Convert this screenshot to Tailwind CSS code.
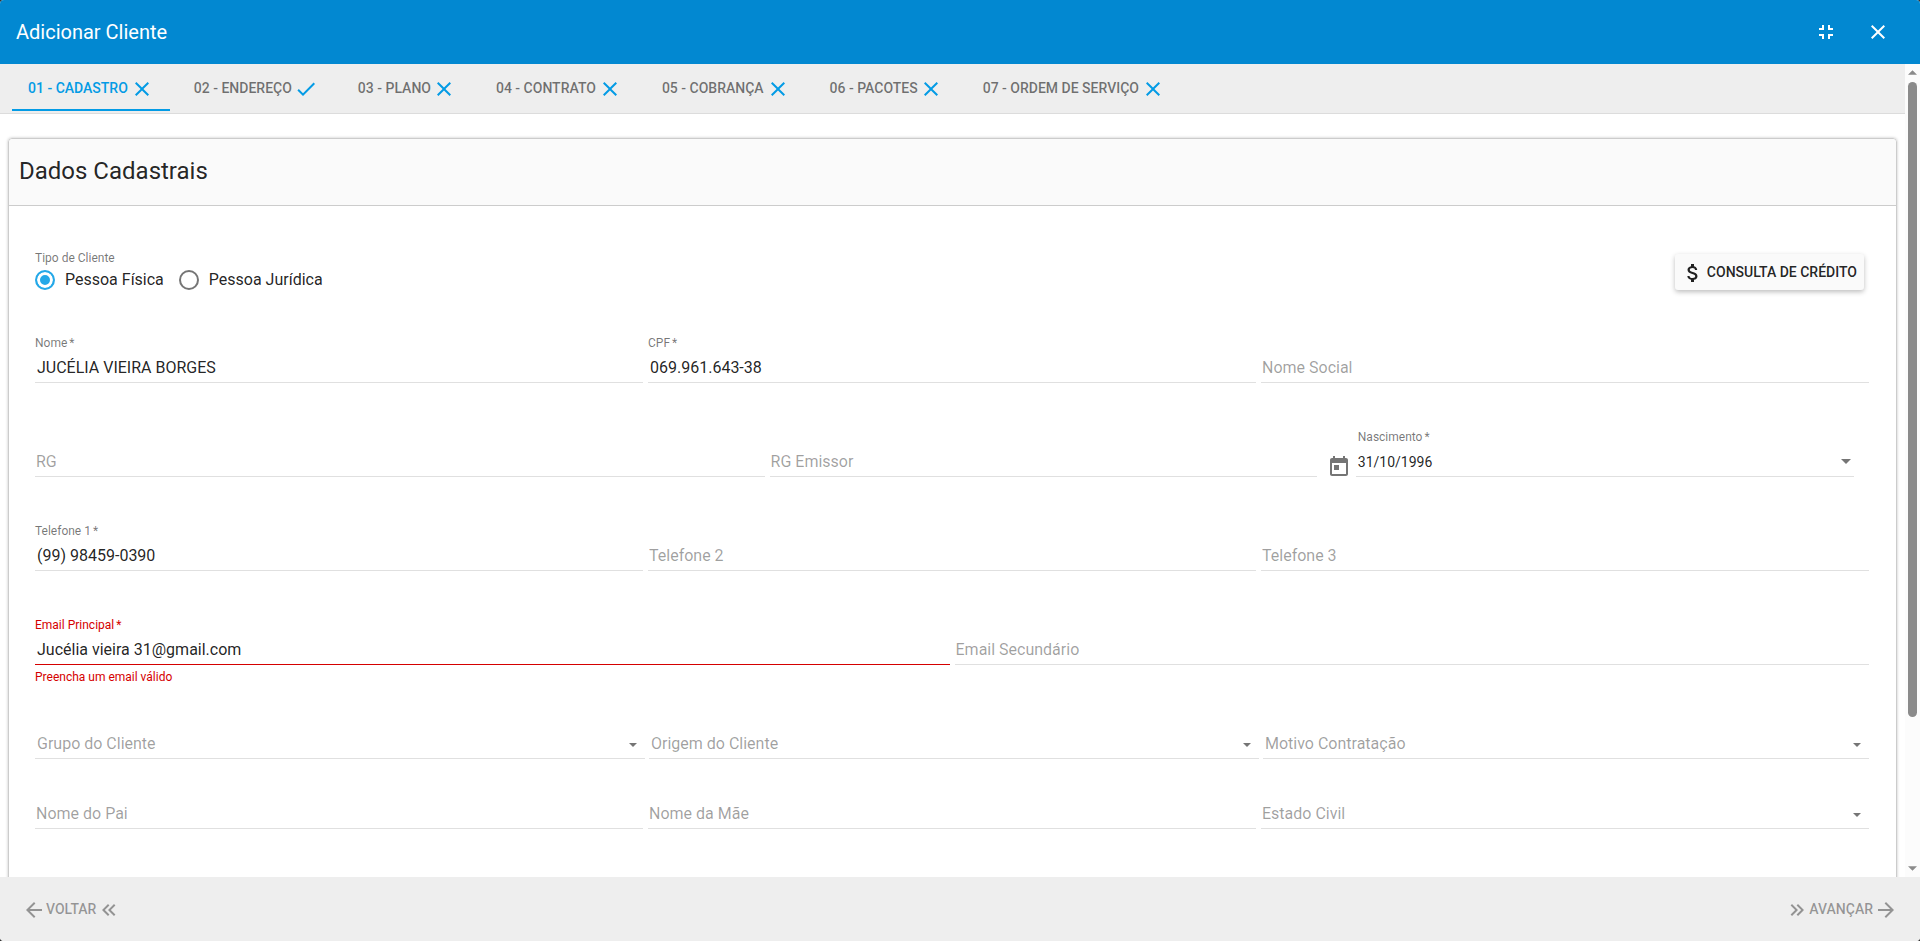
<!DOCTYPE html>
<html lang="pt-BR">
<head>
<meta charset="utf-8">
<meta name="viewport" content="width=device-width, initial-scale=1">
<title>Adicionar Cliente</title>
<script src="https://cdn.jsdelivr.net/npm/@tailwindcss/browser@4"></script>
</head>
<body class="bg-[#333] font-['Roboto',sans-serif] text-black/87">
<svg class="hidden" aria-hidden="true">
  <symbol id="close" viewBox="0 0 24 24"><path fill="currentColor" d="M19 6.41L17.59 5 12 10.59 6.41 5 5 6.41 10.59 12 5 17.59 6.41 19 12 13.41 17.59 19 19 17.59 13.41 12z"/></symbol>
  <symbol id="check" viewBox="0 0 24 24"><path fill="currentColor" d="M9 16.17L4.83 12l-1.42 1.41L9 19 21 7l-1.41-1.41z"/></symbol>
  <symbol id="caret" viewBox="0 0 10 5"><path fill="currentColor" d="M0 0h10L5 5z"/></symbol>
</svg>

<div class="flex h-screen flex-col overflow-hidden rounded-[4px] bg-white">
  <header class="flex h-16 shrink-0 items-center bg-[#0288d1] px-4 text-white">
    <h1 class="grow text-xl">Adicionar Cliente</h1>
    <button type="button" aria-label="Sair da tela cheia" class="mr-2 flex size-11 items-center justify-center">
      <svg class="size-6" viewBox="0 0 24 24"><path fill="currentColor" d="M5 16h3v3h2v-5H5v2zm3-8H5v2h5V5H8v3zm6 11h2v-3h3v-2h-5v5zm2-11V5h-2v5h5V8h-3z"/></svg>
    </button>
    <button type="button" aria-label="Fechar" class="mr-1 flex size-11 items-center justify-center">
      <svg class="size-6"><use href="#close"/></svg>
    </button>
  </header>

  <div class="flex min-h-0 flex-1">
    <main class="min-w-0 flex-1 overflow-hidden">
      <nav role="tablist" class="flex h-[50px] gap-2 border-b border-[#dcdcdc] bg-[#eee] pl-3 text-sm font-medium uppercase text-black/54">
        <button type="button" role="tab" aria-selected="true" class="mb-0.5 flex items-center border-b-2 border-[#039be5] px-4 pt-0.5 uppercase text-[#039be5]"><span class="mr-0.5">01 - Cadastro</span><svg class="mt-0.5 size-6 text-[#039be5]"><use href="#close"/></svg></button>
        <button type="button" role="tab" class="mb-0.5 flex items-center border-b-2 border-transparent px-4 pt-0.5 uppercase"><span class="mr-0.5">02 - Endereço</span><svg class="mt-0.5 size-6 text-[#039be5]"><use href="#check"/></svg></button>
        <button type="button" role="tab" class="mb-0.5 flex items-center border-b-2 border-transparent px-4 pt-0.5 uppercase"><span class="mr-px">03 - Plano</span><svg class="mt-0.5 size-6 text-[#039be5]"><use href="#close"/></svg></button>
        <button type="button" role="tab" class="mb-0.5 flex items-center border-b-2 border-transparent px-4 pt-0.5 uppercase"><span class="mr-0.5">04 - Contrato</span><svg class="mt-0.5 size-6 text-[#039be5]"><use href="#close"/></svg></button>
        <button type="button" role="tab" class="mb-0.5 flex items-center border-b-2 border-transparent px-4 pt-0.5 uppercase"><span class="mr-0.5">05 - Cobrança</span><svg class="mt-0.5 size-6 text-[#039be5]"><use href="#close"/></svg></button>
        <button type="button" role="tab" class="mb-0.5 flex items-center border-b-2 border-transparent px-4 pt-0.5 uppercase"><span class="mr-px">06 - Pacotes</span><svg class="mt-0.5 size-6 text-[#039be5]"><use href="#close"/></svg></button>
        <button type="button" role="tab" class="mb-0.5 flex items-center border-b-2 border-transparent px-4 pt-0.5 uppercase"><span class="mr-0.5">07 - Ordem de Serviço</span><svg class="mt-0.5 size-6 text-[#039be5]"><use href="#close"/></svg></button>
      </nav>

      <section class="mx-2 mt-6 rounded-[4px] border border-[#ccc] shadow-[0_0_3px_rgba(0,0,0,0.25)]">
        <h2 class="flex h-[67px] items-center rounded-t-[4px] border-b border-[#ccc] bg-[#fafafa] px-2.5 pb-0.5 text-2xl">Dados Cadastrais</h2>

        <form class="flex flex-col pt-11 pr-[27px] pb-24 pl-[26px]">
          <div class="mb-[45px] flex items-end justify-between">
            <fieldset>
              <legend class="mb-1 text-xs leading-4 text-black/54">Tipo de Cliente</legend>
              <div class="flex h-5 gap-[15px]">
                <label class="flex items-center gap-2.5"><input type="radio" name="tipo" checked class="size-5 appearance-none rounded-full border-2 border-black/54 checked:border-[#24a8e8] checked:bg-[#24a8e8] checked:shadow-[inset_0_0_0_3px_white]">Pessoa Física</label>
                <label class="flex items-center gap-2.5"><input type="radio" name="tipo" class="size-5 appearance-none rounded-full border-2 border-black/54 checked:border-[#24a8e8] checked:bg-[#24a8e8] checked:shadow-[inset_0_0_0_3px_white]">Pessoa Jurídica</label>
              </div>
            </fieldset>
            <button type="button" class="mr-[5px] flex h-9 items-center gap-0.5 rounded-[3px] bg-[#fafafa] pr-[7px] pl-1.5 text-sm font-medium uppercase shadow-[0_2px_5px_rgba(0,0,0,0.26)]">
              <svg class="mt-0.5 size-6" viewBox="0 0 24 24"><path fill="currentColor" d="M11.8 10.9c-2.27-.59-3-1.2-3-2.15 0-1.09 1.01-1.85 2.7-1.85 1.78 0 2.44.85 2.5 2.1h2.21c-.07-1.72-1.12-3.3-3.21-3.81V3h-3v2.16c-1.94.42-3.5 1.68-3.5 3.61 0 2.31 1.91 3.46 4.7 4.13 2.5.6 3 1.48 3 2.41 0 .69-.49 1.79-2.7 1.79-2.06 0-2.87-.92-2.98-2.1h-2.2c.12 2.19 1.76 3.42 3.68 3.83V21h3v-2.15c1.95-.37 3.5-1.5 3.5-3.55 0-2.84-2.43-3.81-4.7-4.4z"/></svg>
              Consulta de Crédito
            </button>
          </div>

          <div class="mb-[46px] grid grid-cols-3 items-end gap-[5px]">
            <div class="flex flex-col gap-0.5">
              <label for="nome" class="text-xs leading-4 text-black/54">Nome <span class="-ml-px">*</span></label>
              <input id="nome" value="JUCÉLIA VIEIRA BORGES" class="h-[30px] w-full border-b border-black/12 pl-0.5 outline-none">
            </div>
            <div class="flex flex-col gap-0.5">
              <label for="cpf" class="text-xs leading-4 text-black/54">CPF <span class="-ml-px">*</span></label>
              <input id="cpf" value="069.961.643-38" class="h-[30px] w-full border-b border-black/12 pl-0.5 outline-none">
            </div>
            <input aria-label="Nome Social" placeholder="Nome Social" class="h-[30px] w-full border-b border-black/12 pl-px outline-none placeholder:text-black/38">
          </div>

          <div class="mb-[46px] grid grid-cols-[4fr_3fr_3fr] items-end gap-[5px]">
            <input aria-label="RG" placeholder="RG" class="h-[30px] w-full border-b border-black/12 pl-px outline-none placeholder:text-black/38">
            <input aria-label="RG Emissor" placeholder="RG Emissor" class="h-[30px] w-full border-b border-black/12 pl-px outline-none placeholder:text-black/38">
            <div class="flex items-end gap-[5px] pr-[15px] pl-[5px]">
              <button type="button" aria-label="Abrir calendário" class="-mb-0.5 shrink-0 text-black/54">
                <svg class="size-6" viewBox="0 0 24 24"><path fill="currentColor" d="M19 3h-1V1h-2v2H8V1H6v2H5c-1.11 0-1.99.9-1.99 2L3 19c0 1.1.89 2 2 2h14c1.1 0 2-.9 2-2V5c0-1.1-.9-2-2-2zm0 16H5V8h14v11zM7 10h5v5H7z"/></svg>
              </button>
              <div class="flex min-w-0 flex-1 flex-col gap-0.5">
                <label for="nascimento" class="pl-0.5 text-xs leading-4 text-black/54">Nascimento <span class="-ml-px">*</span></label>
                <div class="flex h-[30px] items-center border-b border-black/12 pr-[3px] pl-0.5">
                  <input id="nascimento" value="31/10/1996" class="min-w-0 flex-1 text-sm outline-none">
                  <button type="button" aria-label="Escolher data" class="text-black/54"><svg class="h-[5px] w-2.5"><use href="#caret"/></svg></button>
                </div>
              </div>
            </div>
          </div>

          <div class="mb-[46px] grid grid-cols-3 items-end gap-[5px]">
            <div class="flex flex-col gap-0.5">
              <label for="tel1" class="text-xs leading-4 text-black/54">Telefone 1 <span class="-ml-px">*</span></label>
              <input id="tel1" type="tel" value="(99) 98459-0390" class="h-[30px] w-full border-b border-black/12 pl-0.5 outline-none">
            </div>
            <input type="tel" aria-label="Telefone 2" placeholder="Telefone 2" class="h-[30px] w-full border-b border-black/12 pl-px outline-none placeholder:text-black/38">
            <input type="tel" aria-label="Telefone 3" placeholder="Telefone 3" class="h-[30px] w-full border-b border-black/12 pl-px outline-none placeholder:text-black/38">
          </div>

          <div class="mb-[22px] grid grid-cols-2 items-end gap-x-[5px] gap-y-1">
            <div class="flex flex-col gap-0.5">
              <label for="email" class="text-xs leading-4 text-[#d50000]">Email Principal <span class="-ml-px">*</span></label>
              <input id="email" value="Jucélia vieira 31@gmail.com" aria-invalid="true" aria-describedby="email-erro" class="h-[30px] w-full border-b border-[#d50000] pl-0.5 outline-none">
            </div>
            <input aria-label="Email Secundário" placeholder="Email Secundário" class="h-[30px] w-full border-b border-black/12 pl-px outline-none placeholder:text-black/38">
            <p id="email-erro" class="h-5 text-xs leading-4 text-[#d50000]">Preencha um email válido</p>
          </div>

          <div class="mb-[22px] grid grid-cols-[610fr_610fr_606fr] items-end gap-1 pt-[18px]">
            <div class="relative">
              <select aria-label="Grupo do Cliente" class="h-[30px] w-full appearance-none border-b border-black/12 pl-0.5 text-black/38 outline-none"><option>Grupo do Cliente</option></select>
              <svg class="pointer-events-none absolute right-2 top-3.5 h-1 w-2 text-black/54"><use href="#caret"/></svg>
            </div>
            <div class="relative">
              <select aria-label="Origem do Cliente" class="h-[30px] w-full appearance-none border-b border-black/12 pl-0.5 text-black/38 outline-none"><option>Origem do Cliente</option></select>
              <svg class="pointer-events-none absolute right-2 top-3.5 h-1 w-2 text-black/54"><use href="#caret"/></svg>
            </div>
            <div class="relative">
              <select aria-label="Motivo Contratação" class="h-[30px] w-full appearance-none border-b border-black/12 pl-0.5 text-black/38 outline-none"><option>Motivo Contratação</option></select>
              <svg class="pointer-events-none absolute right-2 top-3.5 h-1 w-2 text-black/54"><use href="#caret"/></svg>
            </div>
          </div>

          <div class="grid grid-cols-3 items-end gap-[5px] pt-[18px]">
            <input aria-label="Nome do Pai" placeholder="Nome do Pai" class="h-[30px] w-full border-b border-black/12 pl-px outline-none placeholder:text-black/38">
            <input aria-label="Nome da Mãe" placeholder="Nome da Mãe" class="h-[30px] w-full border-b border-black/12 pl-px outline-none placeholder:text-black/38">
            <div class="relative">
              <select aria-label="Estado Civil" class="h-[30px] w-full appearance-none border-b border-black/12 pl-px text-black/38 outline-none"><option>Estado Civil</option></select>
              <svg class="pointer-events-none absolute right-2 top-3.5 h-1 w-2 text-black/54"><use href="#caret"/></svg>
            </div>
          </div>
        </form>
      </section>
    </main>

    <div class="flex w-[15px] flex-col items-center bg-[#fcfcfc] py-1.5 text-[#8b8b8b]" aria-hidden="true">
      <svg class="h-[5px] w-[9px] rotate-180"><use href="#caret"/></svg>
      <div class="my-[7px] flex w-[9px] flex-1 flex-col">
        <div class="grow-[634] rounded-full bg-[#8b8b8b]"></div>
        <div class="grow-[142]"></div>
      </div>
      <svg class="h-[5px] w-[9px]"><use href="#caret"/></svg>
    </div>
  </div>

  <footer class="flex h-16 shrink-0 items-center justify-between bg-[#eee] px-[22px] text-sm font-medium text-black/38">
    <button type="button" disabled class="flex items-center uppercase">
      <svg class="mt-0.5 size-6" viewBox="0 0 24 24"><path fill="currentColor" d="M20 11H7.83l5.59-5.59L12 4l-8 8 8 8 1.41-1.41L7.83 13H20v-2z"/></svg>
      <span class="mr-px">Voltar</span>
      <svg class="mt-0.5 size-6" viewBox="0 0 24 24"><path fill="currentColor" d="M18.41 7.41L17 6l-6 6 6 6 1.41-1.41L13.83 12zM12.41 7.41L11 6l-6 6 6 6 1.41-1.41L7.83 12z"/></svg>
    </button>
    <button type="button" disabled class="flex items-center uppercase">
      <svg class="mt-0.5 size-6" viewBox="0 0 24 24"><path fill="currentColor" d="M5.59 7.41L7 6l6 6-6 6-1.41-1.41L10.17 12zM11.59 7.41L13 6l6 6-6 6-1.41-1.41L16.17 12z"/></svg>
      <span class="mr-px">Avançar</span>
      <svg class="mt-0.5 size-6" viewBox="0 0 24 24"><path fill="currentColor" d="M12 4l-1.41 1.41L16.17 11H4v2h12.17l-5.58 5.59L12 20l8-8z"/></svg>
    </button>
  </footer>
</div>
</body>
</html>
